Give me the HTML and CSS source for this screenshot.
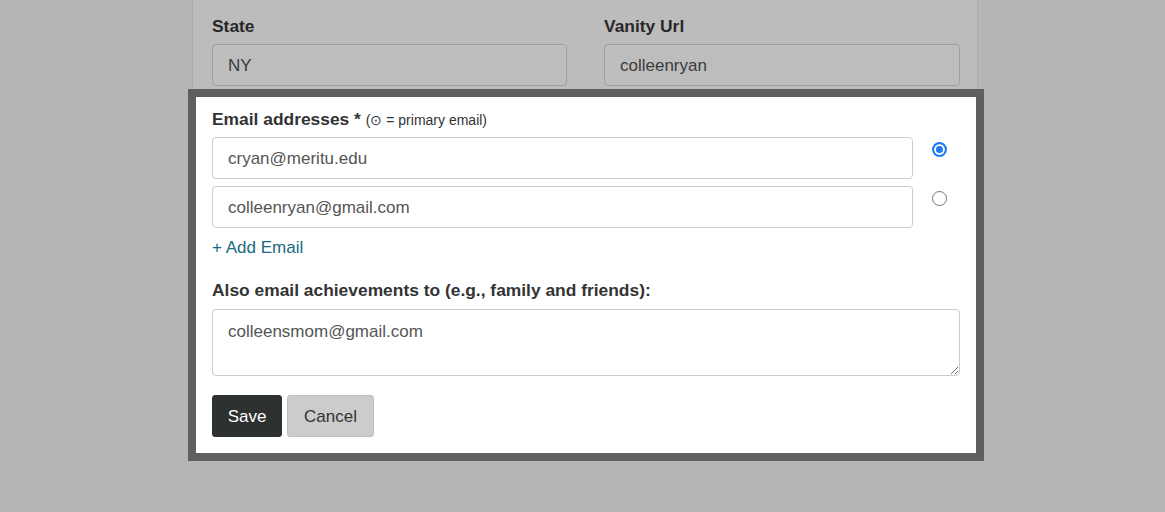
FILE: index.html
```html
<!DOCTYPE html>
<html>
<head>
<meta charset="utf-8">
<link rel="stylesheet" href="styles.css">
</head>
<body>
<div class="card">
  <div class="row">
    <div class="field">
      <div class="label">State</div>
      <div class="input dim">NY</div>
    </div>
    <div class="field">
      <div class="label">Vanity Url</div>
      <div class="input dim">colleenryan</div>
    </div>
  </div>
  <div class="frame">
    <div class="label">Email addresses * <span class="hint">(⊙ = primary email)</span></div>
    <div class="email-row">
      <div class="input">cryan@meritu.edu</div>
      <span class="radio checked"></span>
    </div>
    <div class="email-row second">
      <div class="input">colleenryan@gmail.com</div>
      <span class="radio"></span>
    </div>
    <a class="add" href="#">+ Add Email</a>
    <div class="label also">Also email achievements to (e.g., family and friends):</div>
    <textarea class="area">colleensmom@gmail.com</textarea>
    <div class="buttons">
      <button class="btn save">Save</button>
      <button class="btn cancel">Cancel</button>
    </div>
  </div>
</div>
</body>
</html>
```
FILE: styles.css
```css
html, body {
  margin: 0;
  padding: 0;
  background: #b5b5b5;
  font-family: "Liberation Sans", Arial, Helvetica, sans-serif;
  color: #333;
}
.card {
  width: 784px;
  margin-left: 192px;
  background: #bcbcbc;
  border-left: 1px solid #ababab;
  border-right: 1px solid #ababab;
}
.row {
  display: flex;
  gap: 37px;
  padding: 16px 17px 0 19px;
}
.field {
  width: 356px;
}
.field:first-child {
  width: 355px;
}
.label {
  font-size: 17.4px;
  line-height: 20px;
  font-weight: bold;
  color: #333;
}
.row .label {
  color: #282828;
  margin-bottom: 8px;
}
.input {
  box-sizing: border-box;
  height: 42px;
  border: 1px solid #cccccc;
  border-radius: 4px;
  padding: 1px 15px 0;
  font-size: 17px;
  line-height: 40px;
  color: #555;
  background: #fff;
}
.input.dim {
  background: #bdbdbd;
  border-color: #9f9f9f;
  color: #3b3b3b;
}
.frame {
  margin: 3px -7px 0 -5px;
  border: 8px solid #5f5f5f;
  background: #fff;
  padding: 12px 16px 16px 16px;
}
.hint {
  font-size: 14px;
  font-weight: normal;
  color: #333;
}
.frame > .label {
  margin-bottom: 7px;
}
.email-row {
  display: flex;
  align-items: flex-start;
  gap: 19px;
}
.email-row .input {
  width: 701px;
}
.email-row.second {
  margin-top: 7px;
}
.radio {
  box-sizing: border-box;
  width: 15px;
  height: 15px;
  border-radius: 50%;
  border: 1px solid #767676;
  background: #fff;
  margin-top: 5px;
}
.radio.checked {
  border: 2px solid #1a7cf5;
  box-shadow: inset 0 0 0 2px #fff;
  background: #1a7cf5;
}
.add {
  display: block;
  margin-top: 10px;
  font-size: 17px;
  line-height: 20px;
  color: #1b6a80;
  text-decoration: none;
}
.frame > .label.also {
  margin-top: 22px;
  margin-bottom: 9px;
}
.area {
  display: block;
  box-sizing: border-box;
  width: 748px;
  height: 67px;
  border: 1px solid #cccccc;
  border-radius: 4px;
  padding: 12px 15px 10px;
  margin: 0;
  font-family: "Liberation Sans", Arial, Helvetica, sans-serif;
  font-size: 17px;
  line-height: 20px;
  color: #555;
  resize: vertical;
  outline: none;
}
.buttons {
  display: flex;
  gap: 5px;
  margin-top: 19px;
}
.btn {
  box-sizing: border-box;
  height: 42px;
  border-radius: 3px;
  padding: 2px 15px 0;
  font-family: "Liberation Sans", Arial, Helvetica, sans-serif;
  font-size: 17px;
  cursor: pointer;
}
.save {
  background: #2d312f;
  border: 1px solid #2d312f;
  color: #fff;
  width: 70px;
  padding-left: 0;
  padding-right: 0;
}
.cancel {
  background: #cccccc;
  border: 1px solid #bdbdbd;
  color: #333;
  width: 87px;
  padding-left: 0;
  padding-right: 0;
}
```
